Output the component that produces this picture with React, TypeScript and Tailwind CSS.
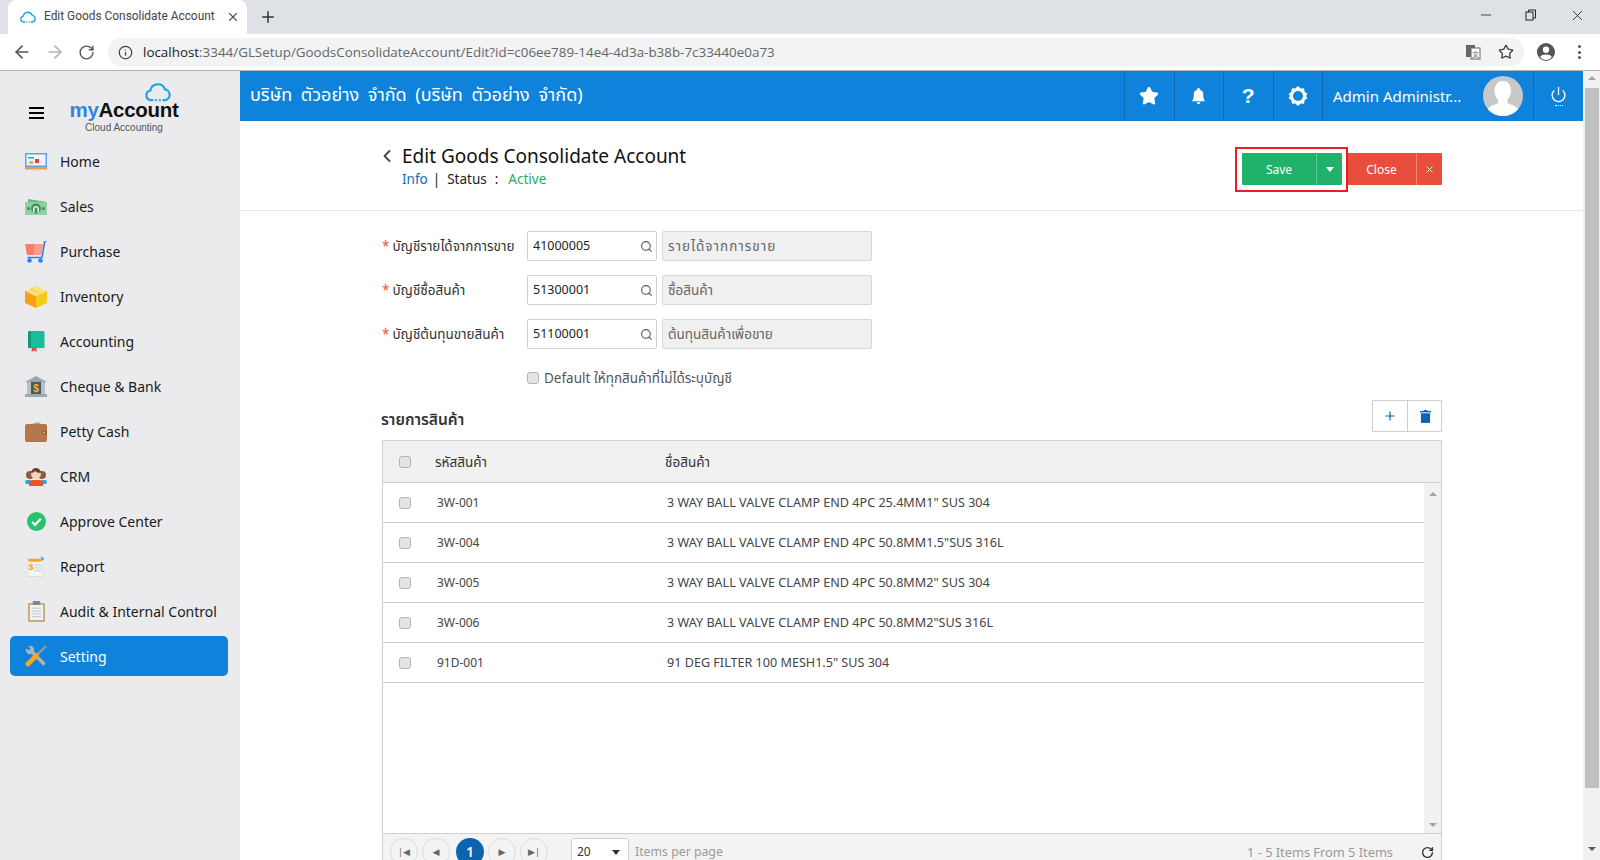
import React from 'react';
import { ArrowLeft, ArrowRight, RotateCw, Info, Star, Minus, X, Plus, Search, ChevronLeft, Power } from 'lucide-react';

const thai = "font-['Noto_Sans','Noto_Sans_Thai','DejaVu_Sans',sans-serif]";

const CloudLogo = ({ className }: { className: string }) => (
  <svg viewBox="0 0 24 18" fill="none" className={className}>
    <path d="M7 16.500H5.500a4.500 4.500 0 0 1-.6-8.900A7 7 0 0 1 18.400 6.600a5 5 0 0 1 .1 9.900H17" stroke="#17a6e8" strokeWidth="2" strokeLinecap="round" />
    <path d="M9.500 16.500h5" stroke="#17a6e8" strokeWidth="2" strokeDasharray="1.500 2" />
  </svg>
);

const HomeIcon = () => (
  <svg viewBox="0 0 22 18" className="w-[22px] h-[18px]">
    <rect x="0" y="0" width="22" height="14" fill="#5ba4e0" />
    <rect x="1.500" y="1.500" width="19" height="11" fill="#f2f5f7" />
    <rect x="10" y="6" width="4" height="4" fill="#e8413c" />
    <rect x="3" y="4" width="6" height="1.500" fill="#3aa6a0" />
    <rect x="4" y="8" width="4" height="3" fill="#f5b342" />
    <rect x="0" y="14" width="22" height="2.500" fill="#f39a3c" />
    <rect x="8" y="16.500" width="6" height="1.500" fill="#c9dbe6" />
  </svg>
);
const SalesIcon = () => (
  <svg viewBox="0 0 22 16" className="w-[22px] h-[16px]">
    <path d="M3 0l19 3v3H3z" fill="#6fb37f" />
    <rect x="0" y="3" width="22" height="13" fill="#8ed1a0" />
    <circle cx="11" cy="9.500" r="5" fill="#3f8f5b" />
    <path d="M8.800 13.500V10a2.200 2.200 0 0 1 4.400 0v3.500" fill="none" stroke="#e8f5ec" strokeWidth="1.600" />
    <circle cx="3.500" cy="9.500" r="1.500" fill="#3f8f5b" />
    <circle cx="18.500" cy="9.500" r="1.500" fill="#3f8f5b" />
  </svg>
);
const PurchaseIcon = () => (
  <svg viewBox="0 0 22 22" className="w-[22px] h-[22px]">
    <path d="M0 3h18l-2 11H2z" fill="#fb7d68" />
    <path d="M9 3h9l-2 11H9z" fill="#fa9c89" />
    <path d="M21.500 0h-1.700L17 16.500H2.500" fill="none" stroke="#2f80ed" strokeWidth="1.600" />
    <circle cx="4.500" cy="19.500" r="2.300" fill="#2f80ed" />
    <circle cx="15.500" cy="19.500" r="2.300" fill="#2f80ed" />
  </svg>
);
const InventoryIcon = () => (
  <svg viewBox="0 0 22 22" className="w-[22px] h-[22px]">
    <path d="M11 0l11 5-11 5.500L0 5z" fill="#fde27a" />
    <path d="M0 5l11 5.500V22L0 17z" fill="#f5a111" />
    <path d="M22 5l-11 5.500V22l11-5z" fill="#f4cb16" />
    <path d="M5 2.800l11 5" stroke="#e9cc6a" strokeWidth="1" />
  </svg>
);
const AccountingIcon = () => (
  <svg viewBox="0 0 18 22" className="w-[17px] h-[21px]">
    <path d="M2 0h14a1.500 1.500 0 0 1 1.500 1.500V18H0V2a2 2 0 0 1 2-2z" fill="#1abc9c" />
    <path d="M0 2a2 2 0 0 1 2-2h1v18H0z" fill="#11967c" />
    <rect x="0" y="18" width="17.500" height="3" fill="#d6e8e2" />
    <path d="M4 17h5v5l-2.500-1.500L4 22z" fill="#e74c4c" />
  </svg>
);
const ChequeIcon = () => (
  <svg viewBox="0 0 22 21" className="w-[22px] h-[21px]">
    <path d="M11 0l11 6H0z" fill="#9aa7ad" />
    <rect x="2" y="6" width="18" height="12" fill="#b5bfc4" />
    <rect x="6" y="6" width="10" height="12" fill="#4a5b66" />
    <rect x="0" y="18" width="22" height="3" fill="#9aa7ad" />
    <text x="11" y="16" textAnchor="middle" fontSize="10" fontWeight="700" fill="#f5b81f" fontFamily="Liberation Sans, sans-serif">$</text>
  </svg>
);
const PettyIcon = () => (
  <svg viewBox="0 0 22 20" className="w-[22px] h-[20px]">
    <path d="M3 3l10-3 5 3z" fill="#6fc3a4" />
    <rect x="0" y="2" width="22" height="18" rx="2" fill="#b5764a" />
    <rect x="17" y="8.500" width="5" height="4" rx="1" fill="#8f5a36" />
    <circle cx="19" cy="10.500" r="1" fill="#f5c242" />
  </svg>
);
const CrmIcon = () => (
  <svg viewBox="0 0 22 20" className="w-[22px] h-[20px]">
    <circle cx="5" cy="8" r="4" fill="#8a5a44" />
    <circle cx="17" cy="8" r="4" fill="#8a5a44" />
    <rect x="0" y="13" width="7" height="4" rx="2" fill="#2fa8d8" />
    <rect x="15" y="13" width="7" height="4" rx="2" fill="#2fa8d8" />
    <circle cx="11" cy="7" r="5" fill="#f9d3b0" />
    <path d="M6 6a5 5 0 0 1 10 0c-3 0-5-1-6-2-1 1-2 2-4 2z" fill="#6d4434" />
    <path d="M4 19v-2a4 4 0 0 1 4-4h6a4 4 0 0 1 4 4v2z" fill="#f0502e" />
  </svg>
);
const ApproveIcon = () => (
  <svg viewBox="0 0 20 20" className="w-[19px] h-[19px]">
    <circle cx="10" cy="10" r="10" fill="#27c36c" />
    <path d="M5.500 10.500l3 3 6-6.500" fill="none" stroke="#fff" strokeWidth="2.400" />
  </svg>
);
const ReportIcon = () => (
  <svg viewBox="0 0 18 22" className="w-[18px] h-[21px]">
    <rect x="0.500" y="2.500" width="16" height="19" fill="#f4f5f6" stroke="#dcdde0" />
    <rect x="1" y="3" width="14" height="3" fill="#f5a623" />
    <path d="M14 0l4 3-3 2z" fill="#5aa9d6" />
    <rect x="7" y="9" width="8" height="1" fill="#c3c7cb" />
    <rect x="7" y="12" width="8" height="1" fill="#c3c7cb" />
    <rect x="7" y="15" width="8" height="1" fill="#c3c7cb" />
    <text x="4" y="15" textAnchor="middle" fontSize="9" fontWeight="700" fill="#ef9a1a" fontFamily="Liberation Sans, sans-serif">$</text>
  </svg>
);
const AuditIcon = () => (
  <svg viewBox="0 0 18 22" className="w-[17px] h-[21px]">
    <rect x="0" y="2" width="18" height="20" rx="1" fill="#caa979" />
    <rect x="2" y="4" width="14" height="16" fill="#f3f3f1" />
    <rect x="5" y="0" width="8" height="4" rx="1" fill="#7c8a91" />
    <rect x="4" y="7" width="10" height="1" fill="#bfc3c5" />
    <rect x="4" y="10" width="10" height="1" fill="#bfc3c5" />
    <rect x="4" y="13" width="10" height="1" fill="#bfc3c5" />
    <rect x="4" y="16" width="10" height="1" fill="#bfc3c5" />
  </svg>
);
const SettingIcon = () => (
  <svg viewBox="0 0 22 22" className="w-[22px] h-[22px]" fill="none">
    <path d="M5.500 5.500L18.500 18.500" stroke="#a5b5bd" strokeWidth="3.600" strokeLinecap="round" />
    <circle cx="5" cy="5" r="4.200" fill="#a5b5bd" />
    <path d="M2 0l3.500 3.500-2 2L0 2z" fill="#0f83dc" />
    <path d="M20.500 1.500L11 11" stroke="#8fa3ad" strokeWidth="2" />
    <path d="M20 0l2 2-1.500 1.500-2-2z" fill="#7f939d" />
    <path d="M11.500 10.500L3 19" stroke="#f6a81f" strokeWidth="4.600" strokeLinecap="round" />
  </svg>
);

const menuItems = [
  { label: 'Home', icon: <HomeIcon /> },
  { label: 'Sales', icon: <SalesIcon /> },
  { label: 'Purchase', icon: <PurchaseIcon /> },
  { label: 'Inventory', icon: <InventoryIcon /> },
  { label: 'Accounting', icon: <AccountingIcon /> },
  { label: 'Cheque & Bank', icon: <ChequeIcon /> },
  { label: 'Petty Cash', icon: <PettyIcon /> },
  { label: 'CRM', icon: <CrmIcon /> },
  { label: 'Approve Center', icon: <ApproveIcon /> },
  { label: 'Report', icon: <ReportIcon /> },
  { label: 'Audit & Internal Control', icon: <AuditIcon /> },
  { label: 'Setting', icon: <SettingIcon />, active: true },
];

const formRows = [
  { label: 'บัญชีรายได้จากการขาย', code: '41000005', name: 'รายได้จากการขาย', nameClass: 'tracking-[1px]' },
  { label: 'บัญชีซื้อสินค้า', code: '51300001', name: 'ซื้อสินค้า', nameClass: '' },
  { label: 'บัญชีต้นทุนขายสินค้า', code: '51100001', name: 'ต้นทุนสินค้าเพื่อขาย', nameClass: '' },
];

const goods = [
  { code: '3W-001', name: '3 WAY BALL VALVE CLAMP END 4PC 25.4MM1" SUS 304' },
  { code: '3W-004', name: '3 WAY BALL VALVE CLAMP END 4PC 50.8MM1.5"SUS 316L' },
  { code: '3W-005', name: '3 WAY BALL VALVE CLAMP END 4PC 50.8MM2" SUS 304' },
  { code: '3W-006', name: '3 WAY BALL VALVE CLAMP END 4PC 50.8MM2"SUS 316L' },
  { code: '91D-001', name: '91 DEG FILTER 100 MESH1.5" SUS 304' },
];

const Check = () => (
  <input type="checkbox" className="appearance-none block w-3 h-3 rounded-[3px] border border-[#b4b4b4] bg-[#e4e4e4] shrink-0" />
);

const Sidebar = () => (
  <aside className="w-60 shrink-0 bg-[#ebebed] pl-2.5 pr-3">
    <div className="h-[68px] flex">
      <div className="mt-[36px] ml-[19px] w-[15px] flex flex-col gap-[3px]">
        <span className="block h-[2px] bg-black" />
        <span className="block h-[2px] bg-black" />
        <span className="block h-[2px] bg-black" />
      </div>
      <div className="ml-[25px] w-[110px] flex flex-col items-center font-['Liberation_Sans',sans-serif]">
        <CloudLogo className="w-[26px] h-[20px] mt-[11px] ml-[68px] -mb-[2px]" />
        <div className="text-[20.500px] leading-[20px] font-bold tracking-[-0.3px] text-[#111]">
          <span className="text-[#2f86e0]">my</span>Account
        </div>
        <div className="text-[10px] leading-3 text-[#555] mt-[2px]">Cloud Accounting</div>
      </div>
    </div>
    {menuItems.map((m) => (
      <div key={m.label} className="h-[45px] flex items-center">
        <div className={`w-full h-10 rounded-[5px] flex items-center ${m.active ? 'bg-[#0f83dc] text-white -mt-[1px]' : 'text-[#1a1a1a]'}`}>
          <span className="w-[50px] pl-[15px] flex justify-center pr-[13px] shrink-0">{m.icon}</span>
          <span className="text-[14px] font-['Noto_Sans',sans-serif]">{m.label}</span>
        </div>
      </div>
    ))}
  </aside>
);

const BrowserChrome = () => (
  <>
    <div className="h-[34px] bg-[#dee1e6] flex items-end pl-2 font-['Roboto',sans-serif] shrink-0">
      <div className="w-[239px] h-[34px] bg-white rounded-t-lg flex items-center pl-3 pr-2 gap-2">
        <CloudLogo className="w-4 h-3.5 shrink-0" />
        <span className="text-[11.900px] text-[#444] w-[166px] shrink-0 whitespace-nowrap">Edit Goods Consolidate Account</span>
        <X className="w-3.5 h-3.5 text-[#555] ml-2 shrink-0" />
      </div>
      <Plus className="w-[18px] h-[18px] text-[#333] ml-3 mb-2" />
      <div className="ml-auto flex items-center h-full pb-1 text-[#222]">
        <Minus className="w-4 h-4" strokeWidth={1.2} />
        <svg viewBox="0 0 12 12" className="w-3 h-3 ml-[31px]" fill="none" stroke="#222">
          <rect x="1" y="3" width="7" height="8" />
          <path d="M3.500 3V1h7v8H8" />
        </svg>
        <X className="w-[17px] h-[17px] ml-[32px] mr-[14px]" strokeWidth={1.2} />
      </div>
    </div>
    <div className="h-[37px] bg-white border-b border-[#b5b5b5] flex items-center pl-3 shrink-0 font-['Open_Sans',sans-serif]">
      <ArrowLeft className="w-5 h-5 text-[#555]" />
      <ArrowRight className="w-5 h-5 text-[#b4b4b4] ml-[13px]" />
      <RotateCw className="w-[17px] h-[17px] text-[#555] ml-[13px]" />
      <div className="ml-[13px] flex-1 h-7 rounded-full bg-[#f1f3f4] flex items-center pl-[10px] pr-[4px]">
        <Info className="w-[15px] h-[15px] text-[#444]" />
        <span className="ml-[10px] text-[13.400px] text-[#666] whitespace-nowrap"><span className="text-[#222]">localhost</span>:3344/GLSetup/GoodsConsolidateAccount/Edit?id=c06ee789-14e4-4d3a-b38b-7c33440e0a73</span>
        <svg viewBox="0 0 16 16" className="w-4 h-4 ml-auto">
          <rect x="1" y="1" width="9" height="12" fill="#666" />
          <rect x="6" y="4" width="9" height="11" fill="#fff" stroke="#666" />
          <text x="10.500" y="12.500" textAnchor="middle" fontSize="7" fill="#666" fontFamily="Noto Sans CJK SC, sans-serif">文</text>
        </svg>
        <Star className="w-4 h-4 text-[#444] ml-[17px] mr-[6px]" />
      </div>
      <svg viewBox="0 0 20 20" className="w-[18px] h-[18px] ml-[13px]">
        <circle cx="10" cy="10" r="10" fill="#555" />
        <circle cx="10" cy="7.500" r="3.500" fill="#fff" />
        <path d="M3.500 15.500c2-3.500 11-3.500 13 0a8 8 0 0 1-13 0z" fill="#fff" />
      </svg>
      <div className="ml-[23px] flex flex-col gap-[2.500px] mr-[19px]">
        <span className="block w-[3px] h-[3px] rounded-full bg-[#555]" />
        <span className="block w-[3px] h-[3px] rounded-full bg-[#555]" />
        <span className="block w-[3px] h-[3px] rounded-full bg-[#555]" />
      </div>
    </div>
  </>
);

const HeaderCell = ({ children }: { children: React.ReactNode }) => (
  <div className="w-[49.500px] h-full border-l border-[#0b68af] flex items-center justify-center">{children}</div>
);

const TopBar = () => (
  <header className="h-[50px] bg-[#0f83dc] text-white flex items-center shrink-0">
    <div className={`flex-1 pl-2.5 pb-[3px] text-[18px] [word-spacing:4px] ${thai}`}>บริษัท ตัวอย่าง จำกัด (บริษัท ตัวอย่าง จำกัด)</div>
    <HeaderCell><Star className="w-5 h-5" fill="white" /></HeaderCell>
    <HeaderCell>
      <svg viewBox="0 0 16 18" className="w-[15px] h-[17px]" fill="white">
        <path d="M8 0a1.500 1.500 0 0 1 1.500 1.800A5 5 0 0 1 13 7c0 4 1 5.500 2 7H1c1-1.500 2-3 2-7a5 5 0 0 1 3.500-5.200A1.500 1.500 0 0 1 8 0z" />
        <path d="M6 15h4a2 2 0 0 1-4 0z" />
      </svg>
    </HeaderCell>
    <HeaderCell><span className="text-[21px] font-bold font-['Liberation_Sans',sans-serif]">?</span></HeaderCell>
    <HeaderCell>
      <svg viewBox="0 0 20 20" className="w-5 h-5" fill="white">
        <path d="M10 0l2.600 2.500 3.400-.2.600 3.500L19.500 8 18 10l1.500 2-2.900 2.200-.6 3.500-3.400-.2L10 20l-2.600-2.500-3.400.2-.6-3.500L.500 12 2 10 .500 8l2.900-2.200.6-3.500 3.400.2z" />
        <circle cx="10" cy="10" r="5" fill="#0f83dc" />
      </svg>
    </HeaderCell>
    <div className="w-[211px] h-full border-l border-[#0b68af] flex items-center pl-[10px] font-['Noto_Sans',sans-serif]">
      <span className="text-[15px] whitespace-nowrap">Admin Administr...</span>
      <div className="ml-auto mr-[10px] w-10 h-10 rounded-full bg-[#c8c8c8] overflow-hidden">
        <svg viewBox="0 0 40 40" className="w-10 h-10">
          <path d="M20 5c6 0 8 5 8 10 0 4-2 7-3.500 9v3c4 2 9 3 11 7v6H4v-6c2-4 7-5 11-7v-3c-1.500-2-3.500-5-3.500-9 0-5 2.500-10 8.500-10z" fill="#fff" />
        </svg>
      </div>
    </div>
    <div className="w-[50px] h-full border-l border-[#0b68af] flex flex-col items-center justify-center gap-[2px]">
      <Power className="w-[17px] h-[17px]" strokeWidth={1.8} />
      <span className="block w-2 border-t border-dotted border-white" />
    </div>
  </header>
);

const PageHead = () => (
  <div className="h-[90px] shrink-0 border-b border-[#e6e6e6] pl-[142px] pr-[141px] flex justify-between font-['Noto_Sans',sans-serif]">
    <div className="flex pt-[21px]">
      <ChevronLeft className="w-5 h-5 text-[#444] -ml-[5px] mt-1" strokeWidth={2.2} />
      <div className="ml-[5px]">
        <h1 className="text-[19px] leading-7 text-[#111]">Edit Goods Consolidate Account</h1>
        <div className="text-[13.500px] leading-5 flex -mt-[1px]">
          <span className="text-[#0d6ebd]">Info</span>
          <span className="ml-[5px] text-[#222]">|</span>
          <span className="ml-[7px] text-[#222]">Status</span>
          <span className="ml-[8px] text-[#222]">:</span>
          <span className="ml-[10px] text-[#27ae60]">Active</span>
        </div>
      </div>
    </div>
    <div className="flex gap-[5px] pt-8 text-white text-xs">
      <div className="relative flex h-8 w-[100px] bg-[#20b16a] rounded-[1px]">
        <span className="w-[74px] flex items-center justify-center pt-[1px]">Save</span>
        <span className="flex-1 border-l border-[#5cc995] flex items-center justify-center">
          <span className="block border-x-[4px] border-x-transparent border-t-[5px] border-t-white" />
        </span>
        <span className="absolute -left-[7px] -top-[6px] w-[113px] h-[45px] border-2 border-[#ed1c24]" />
      </div>
      <div className="flex h-8 w-[95px] bg-[#e94e3d] rounded-[1px]">
        <span className="w-[69px] flex items-center justify-center pt-[1px]">Close</span>
        <span className="flex-1 border-l border-[#f08477] flex items-center justify-center">
          <X className="w-[11px] h-[11px]" />
        </span>
      </div>
    </div>
  </div>
);

const AccountForm = () => (
  <div className={`pt-5 ${thai}`}>
    <div className="flex flex-col gap-[14px]">
      {formRows.map((r) => (
        <div key={r.code} className="flex items-center h-[30px]">
          <label className="w-[145px] text-[13.500px] text-[#333] whitespace-nowrap">
            <span className="text-[#f0512c] mr-[3px]">*</span>{r.label}
          </label>
          <div className="w-[130px] h-[30px] border border-[#cfcfcf] rounded-[2px] flex items-center pl-[5px] pr-[3px]">
            <input defaultValue={r.code} className="w-full min-w-0 text-[12.500px] text-[#222] outline-none" />
            <Search className="w-[13px] h-[13px] text-[#555] shrink-0" />
          </div>
          <div className={`ml-[5px] w-[210px] h-[30px] border border-[#d8d8d8] bg-[#f0f0f0] rounded-[2px] flex items-center px-[5px] pt-[1px] text-[13.500px] text-[#666] ${r.nameClass}`}>{r.name}</div>
        </div>
      ))}
    </div>
    <div className="flex items-center h-5 mt-[19px] ml-[145px] text-[13.500px] text-[#555]">
      <Check />
      <span className="ml-[5px]">Default ให้ทุกสินค้าที่ไม่ได้ระบุบัญชี</span>
    </div>
  </div>
);

const PageButton = ({ children, active, className = '' }: { children: React.ReactNode; active?: boolean; className?: string }) => (
  <span className={`w-7 h-7 rounded-full flex items-center justify-center ${active ? 'bg-[#0a64b0] text-white text-sm font-semibold' : 'border border-[#dcdcdc] text-[#666] text-[9px]'} ${className}`}>{children}</span>
);

const GoodsGrid = () => (
  <div className="mt-3">
    <div className="flex items-end justify-between h-8">
      <span className={`text-[15.500px] leading-5 font-semibold text-[#333] -ml-[1px] mb-[3px] ${thai}`}>รายการสินค้า</span>
      <div className="flex h-8 border border-[#cfcfcf] rounded-[1px] text-[#0a64b0]">
        <span className="w-[35px] border-r border-[#cfcfcf] flex items-center justify-center"><Plus className="w-[14px] h-[14px]" /></span>
        <span className="w-[33px] pl-[1px] flex items-center justify-center">
          <svg viewBox="0 0 12 14" className="w-[11px] h-[13px]" fill="#0a64b0">
            <rect x="0" y="1" width="12" height="1.500" />
            <rect x="4" y="0" width="4" height="1" />
            <path d="M1 3.500h10V14H1z" />
          </svg>
        </span>
      </div>
    </div>
    <div className={`mt-2 border border-[#d0d0d0] text-xs ${thai}`}>
      <div className="h-[42px] bg-[#f1f1f1] border-b border-[#d0d0d0] flex items-center text-[#333] text-[13.500px]">
        <span className="w-[52px] pl-4"><Check /></span>
        <span className="w-[230px]">รหัสสินค้า</span>
        <span>ชื่อสินค้า</span>
      </div>
      <div className="h-[350px] flex">
        <div className="flex-1">
          {goods.map((g) => (
            <div key={g.code} className="h-10 border-b border-[#d0d0d0] flex items-center text-[#444]">
              <span className="w-[54px] pl-4"><Check /></span>
              <span className="w-[230px]">{g.code}</span>
              <span className="text-[12.600px] pt-[1px]">{g.name}</span>
            </div>
          ))}
        </div>
        <div className="w-[17px] bg-[#f1f1f1] flex flex-col justify-between items-center pt-[9px] pb-[6px]">
          <span className="block border-x-[4px] border-x-transparent border-b-[4px] border-b-[#a3a3a3]" />
          <span className="block border-x-[4px] border-x-transparent border-t-[4px] border-t-[#a3a3a3]" />
        </div>
      </div>
      <div className="h-10 bg-[#f3f3f3] border-t border-[#d0d0d0] flex items-start pt-[4px] pl-[7px] text-[#9a9a9a]">
        <div className="flex gap-1">
          <PageButton>|◀</PageButton>
          <PageButton>◀</PageButton>
          <PageButton active className="ml-[2px]">1</PageButton>
          <PageButton>▶</PageButton>
          <PageButton>▶|</PageButton>
        </div>
        <div className="ml-[23px] w-[58px] h-7 border border-[#cfcfcf] rounded-[3px] bg-white flex items-center justify-between pl-[5px] pr-[8px] text-[#333] text-xs">
          20
          <span className="block border-x-[4px] border-x-transparent border-t-[5px] border-t-[#333]" />
        </div>
        <span className="ml-[6px] mt-[6px] text-[12.300px] leading-4">Items per page</span>
        <span className="ml-auto mt-[6px] text-[12.800px] leading-4">1 - 5 Items From 5 Items</span>
        <RotateCw className="w-[13px] h-[13px] text-[#333] ml-[28px] mr-[7px] mt-[8px]" strokeWidth={2.5} />
      </div>
    </div>
  </div>
);

const PageScrollbar = () => (
  <div className="w-[17px] shrink-0 bg-[#f1f1f1] flex flex-col items-center pt-[5px]">
    <span className="block border-x-[4px] border-x-transparent border-b-[4px] border-b-[#a3a3a3]" />
    <span className="block w-[14px] h-[700px] bg-[#c1c1c1] mt-2" />
    <span className="block mt-[59px] border-x-[4px] border-x-transparent border-t-[4px] border-t-[#555]" />
  </div>
);

export default function App() {
  return (
    <div className="w-[1600px] h-[860px] overflow-hidden flex flex-col bg-white">
      <BrowserChrome />
      <div className="flex-1 flex min-h-0">
        <Sidebar />
        <div className="flex-1 min-w-0 flex flex-col">
          <TopBar />
          <PageHead />
          <div className="pl-[142px] pr-[141px]">
            <AccountForm />
            <GoodsGrid />
          </div>
        </div>
        <PageScrollbar />
      </div>
    </div>
  );
}
